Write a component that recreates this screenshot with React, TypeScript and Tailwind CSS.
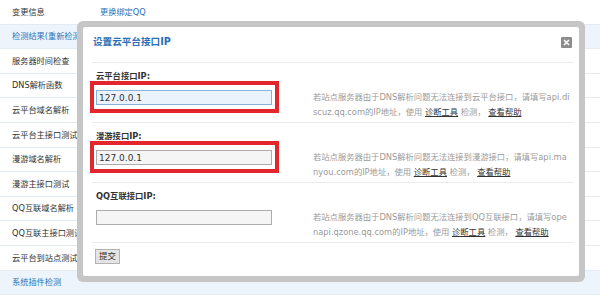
import React from "react";

const FONT = '"DejaVu Sans", "Noto Sans CJK SC", sans-serif';

const rows: { l: string; r?: string; active?: boolean }[] = [
  { l: "变更信息", r: "更换绑定QQ" },
  { l: "检测结果(重新检测)", active: true },
  { l: "服务器时间检查" },
  { l: "DNS解析函数" },
  { l: "云平台域名解析" },
  { l: "云平台主接口测试" },
  { l: "漫游域名解析" },
  { l: "漫游主接口测试" },
  { l: "QQ互联域名解析" },
  { l: "QQ互联主接口测试" },
  { l: "云平台到站点测试" },
  { l: "系统插件检测", active: true },
];

function Section({
  label,
  value,
  highlight,
  focused,
  line1,
  line2,
}: {
  label: string;
  value: string;
  highlight?: boolean;
  focused?: boolean;
  line1: string;
  line2: string;
}) {
  return (
    <div className="h-[60px] border-b border-[#ebebeb] flex flex-col">
      <div className="pt-[7px] pl-[4px] h-[19px] leading-[12px] text-[8.3px] font-bold text-[#333]">
        {label}
      </div>
      <div className="mt-[8px] flex items-start">
        <div className="ml-[4px] relative w-[176px] h-[15px] shrink-0">
          <input
            readOnly
            value={value}
            className={
              focused
                ? "block w-full h-full border border-[#86b4d8] bg-[#eaf3fb] pl-[2px] text-[9px] leading-[13px] text-[#333] outline-none"
                : "block w-full h-full border border-[#acacac] bg-[#f5f5f5] pl-[2px] text-[9px] leading-[13px] text-[#333] outline-none"
            }
            style={{ fontFamily: FONT }}
          />
          {highlight && (
            <div className="absolute left-[-6px] top-[-9px] w-[189px] h-[32px] border-[4px] border-[#e3262b] pointer-events-none" />
          )}
        </div>
        <div className="ml-[41px] leading-[15px] text-[8.3px] text-[#9a9a9a] whitespace-nowrap">
          <div>{line1}</div>
          <div>
            {line2}的IP地址，使用{" "}
            <span className="underline text-[#333]">诊断工具</span> 检测，{" "}
            <span className="underline text-[#333]">查看帮助</span>
          </div>
        </div>
      </div>
    </div>
  );
}

export default function App() {
  return (
    <div
      className="relative w-[600px] h-[297px] overflow-hidden bg-white"
      style={{ fontFamily: FONT }}
    >
      <div className="flex flex-col">
        {rows.map((row, i) => (
          <div
            key={i}
            className={
              row.active
                ? "h-[24.6px] shrink-0 flex items-center border-b border-[#e4ebf2] bg-[#edf4fb]"
                : "h-[24.6px] shrink-0 flex items-center border-b border-[#e4ebf2] bg-white"
            }
          >
            <div
              className={
                row.active
                  ? "pl-[12px] w-[100px] shrink-0 whitespace-nowrap text-[8.2px] text-[#2d74b8]"
                  : "pl-[12px] w-[100px] shrink-0 whitespace-nowrap text-[8.2px] text-[#333]"
              }
            >
              {row.l}
            </div>
            {row.r && (
              <div className="text-[8.2px] text-[#2d6fb4]">{row.r}</div>
            )}
          </div>
        ))}
      </div>

      <div className="absolute left-[77px] top-[21px] w-[508px] h-[261px] rounded-[6px] bg-[#c6c6c6] p-[6px]">
        <div className="relative h-full bg-white rounded-[2px] pl-[9px] pr-[5px] flex flex-col">
          <div className="h-[36px] border-b border-[#ebebeb] pt-[9px] pl-[1px] leading-[12px] text-[9.6px] font-bold text-[#2d6fb4]">
            设置云平台接口IP
          </div>
          <button className="absolute top-[10px] right-[7px] w-[11px] h-[11px] bg-[#8d8d8d] rounded-[1px] flex items-center justify-center">
            <svg width="7" height="7" viewBox="0 0 7 7">
              <path d="M1 1L6 6M6 1L1 6" stroke="#fff" strokeWidth="1.6" />
            </svg>
          </button>
          <Section
            label="云平台接口IP:"
            value="127.0.0.1"
            highlight
            focused
            line1="若站点服务器由于DNS解析问题无法连接到云平台接口，请填写api.di"
            line2="scuz.qq.com"
          />
          <Section
            label="漫游接口IP:"
            value="127.0.0.1"
            highlight
            line1="若站点服务器由于DNS解析问题无法连接到漫游接口，请填写api.ma"
            line2="nyou.com"
          />
          <Section
            label="QQ互联接口IP:"
            value=""
            line1="若站点服务器由于DNS解析问题无法连接到QQ互联接口，请填写ope"
            line2="napi.qzone.qq.com"
          />
          <div className="pt-[6px] pl-[3px]">
            <button className="w-[25px] h-[15px] bg-[#e4e4e4] border border-[#b3b3b3] text-[8.5px] leading-[13px] text-[#333] flex items-center justify-center">
              提交
            </button>
          </div>
        </div>
      </div>
    </div>
  );
}
